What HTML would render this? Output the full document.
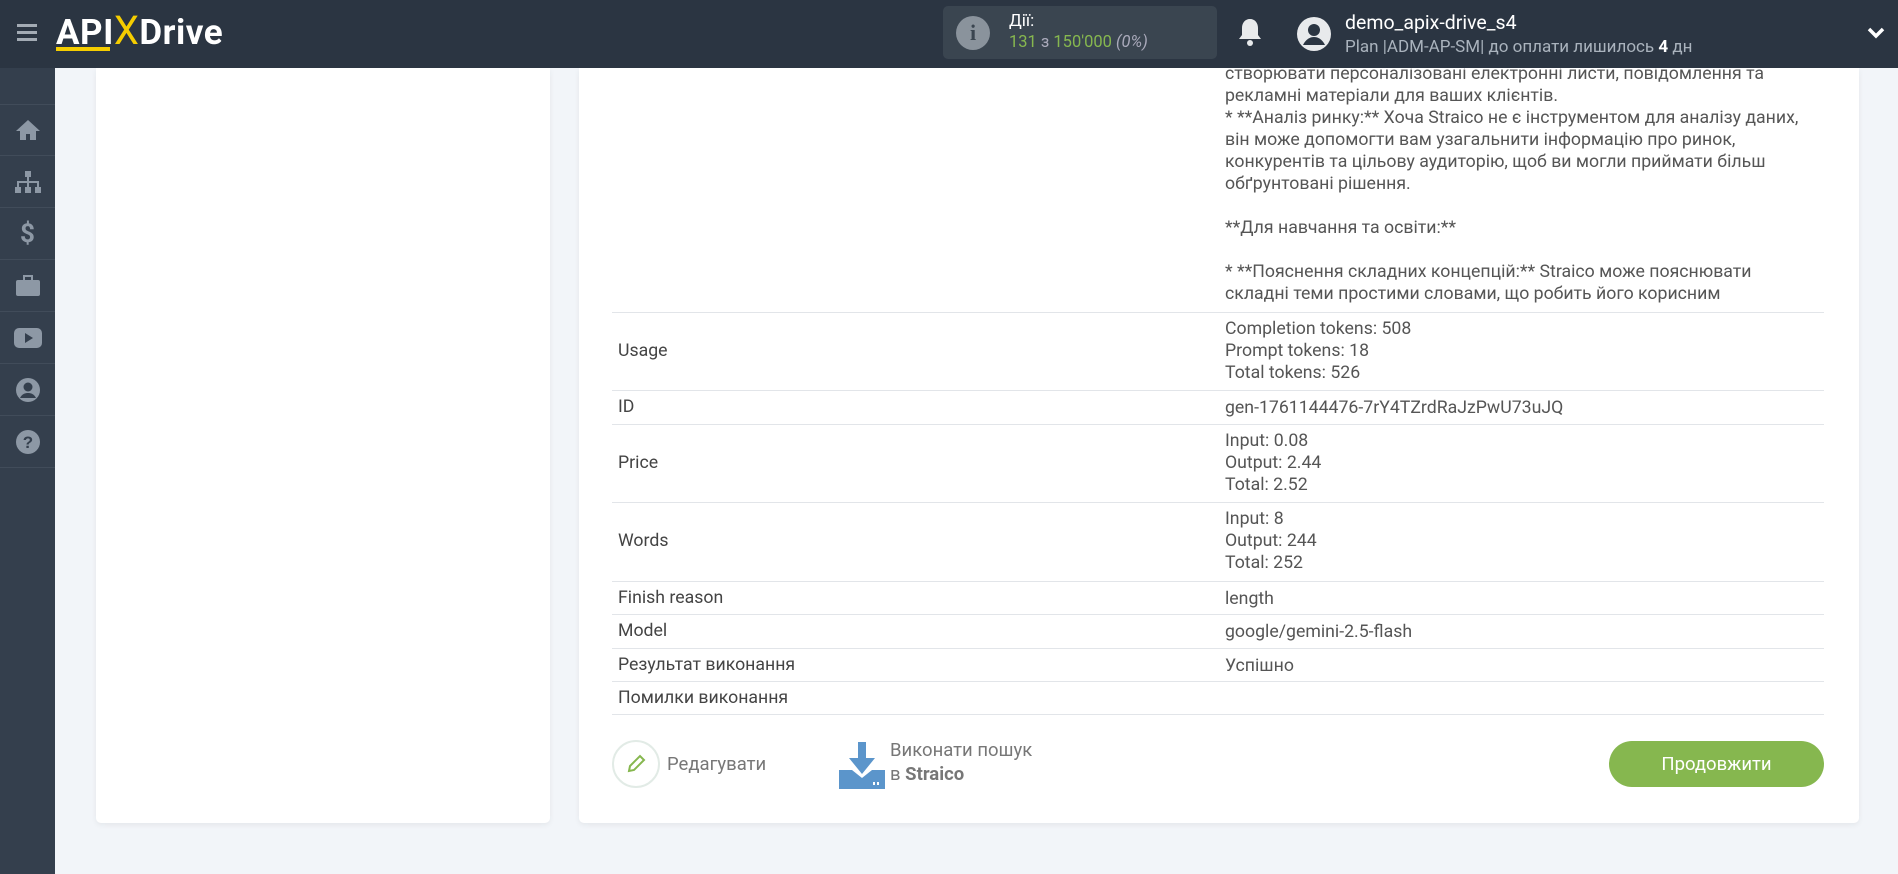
<!DOCTYPE html>
<html><head><meta charset="utf-8"><style>
*{margin:0;padding:0;box-sizing:border-box}
body{width:1898px;height:874px;overflow:hidden;background:#f2f5f9;font-family:"Roboto","Liberation Sans","DejaVu Sans",sans-serif;color:#444;position:relative}
.hdr{position:absolute;left:0;top:0;width:1898px;height:68px;background:#2b3542;z-index:5}
.side{position:absolute;left:0;top:68px;width:55px;height:806px;background:#343f4d}
.side .it{position:absolute;left:0;width:55px;height:52px;border-bottom:1px solid #414c5a;display:flex;align-items:center;justify-content:center}
.card{position:absolute;background:#fff;box-shadow:0 2px 6px rgba(0,0,0,.06);border-radius:0 0 5px 5px}
.txt{position:absolute;left:1225px;top:63px;font-size:17.7px;line-height:22px;color:#555;white-space:pre}
.row{position:absolute;left:612px;width:1212px;border-top:1px solid #e2e5e9;font-size:17.7px;color:#444}
.row .k{position:absolute;left:6px}
.row .v{position:absolute;left:613px;line-height:22px;color:#555}
</style></head><body>
<div class="hdr">
 <div style="position:absolute;left:17px;top:24px;width:20px;height:3px;background:#a3abb4;box-shadow:0 7px 0 #a3abb4,0 14px 0 #a3abb4"></div>
 <div style="position:absolute;left:56px;top:7px;font-size:35px;font-weight:bold;color:#fff;letter-spacing:0.5px">API<span style="color:#f5cd00;font-weight:normal;font-size:40px">X</span>Drive</div>
 <div style="position:absolute;left:56px;top:47px;width:54px;height:4px;background:#f5cd00"></div>
 <div style="position:absolute;left:943px;top:6px;width:274px;height:53px;background:#3a4550;border-radius:5px">
  <div style="position:absolute;left:13px;top:10px;width:34px;height:34px;border-radius:50%;background:#8a939c;color:#3a4550;font:bold 22px 'Liberation Serif',serif;text-align:center;line-height:34px">i</div>
  <div style="position:absolute;left:66px;top:5px;color:#fff;font-size:17px">Дії:</div>
  <div style="position:absolute;left:66px;top:27px;color:#86b74f;font-size:16.5px">131 <span style="color:#aab">з</span> 150'000 <i style="color:#aab">(0%)</i></div>
 </div>
 <svg style="position:absolute;left:1237px;top:17px" width="26" height="30" viewBox="0 0 26 30"><path d="M13 2c-5 0-8 4-8 9v7l-3 4h22l-3-4v-7c0-5-3-9-8-9z" fill="#e8eaec"/><circle cx="13" cy="26" r="3" fill="#e8eaec"/></svg>
 <svg style="position:absolute;left:1296px;top:16px" width="36" height="36" viewBox="0 0 36 36"><circle cx="18" cy="18" r="17" fill="#e8eaec"/><circle cx="18" cy="14" r="6" fill="#2b3542"/><path d="M7 29c3-6 7-8 11-8s8 2 11 8" fill="#2b3542"/></svg>
 <div style="position:absolute;left:1345px;top:11px;color:#fff;font-size:19.5px">demo_apix-drive_s4</div>
 <div style="position:absolute;left:1345px;top:37px;color:#aab3bd;font-size:17px">Plan |ADM-AP-SM| до оплати лишилось <b style="color:#fff">4</b> дн</div>
 <svg style="position:absolute;left:1867px;top:27px" width="18" height="12" viewBox="0 0 18 12"><path d="M2 2l7 7 7-7" stroke="#fff" stroke-width="3.5" fill="none"/></svg>
</div>
<div class="side">
 <div class="it" style="top:36px;border-top:1px solid #414c5a"><svg width="26" height="22" viewBox="0 0 26 22"><path d="M13 1L1 12h4v9h6v-6h4v6h6v-9h4z" fill="#8d98a5"/></svg></div>
 <div class="it" style="top:88px"><svg width="28" height="24" viewBox="0 0 28 24"><rect x="11" y="1" width="6" height="6" fill="#8d98a5"/><rect x="1" y="17" width="6" height="6" fill="#8d98a5"/><rect x="11" y="17" width="6" height="6" fill="#8d98a5"/><rect x="21" y="17" width="6" height="6" fill="#8d98a5"/><path d="M14 7v5M4 17v-5h20v5M14 12v5" stroke="#8d98a5" stroke-width="2" fill="none"/></svg></div>
 <div class="it" style="top:140px;color:#8d98a5;font-size:26px;font-weight:bold">$</div>
 <div class="it" style="top:192px"><svg width="26" height="22" viewBox="0 0 26 22"><rect x="1" y="5" width="24" height="16" rx="2" fill="#8d98a5"/><rect x="9" y="1" width="8" height="5" fill="none" stroke="#8d98a5" stroke-width="2"/></svg></div>
 <div class="it" style="top:244px"><svg width="28" height="20" viewBox="0 0 28 20"><rect x="0" y="0" width="28" height="20" rx="5" fill="#8d98a5"/><path d="M11 5v10l8-5z" fill="#343f4d"/></svg></div>
 <div class="it" style="top:296px"><svg width="26" height="26" viewBox="0 0 26 26"><circle cx="13" cy="13" r="12" fill="#8d98a5"/><circle cx="13" cy="10" r="4.5" fill="#343f4d"/><path d="M5 21c2-4 5-5 8-5s6 1 8 5" fill="#343f4d"/></svg></div>
 <div class="it" style="top:348px"><svg width="26" height="26" viewBox="0 0 26 26"><circle cx="13" cy="13" r="12" fill="#8d98a5"/><text x="13" y="19" text-anchor="middle" font-size="17" font-weight="bold" fill="#343f4d" font-family="Liberation Sans">?</text></svg></div>
</div>
<div class="card" style="left:96px;top:68px;width:454px;height:755px"></div>
<div class="card" style="left:579px;top:68px;width:1280px;height:755px"></div>
<div class="txt">створювати персоналізовані електронні листи, повідомлення та
рекламні матеріали для ваших клієнтів.
* **Аналіз ринку:** Хоча Straico не є інструментом для аналізу даних,
він може допомогти вам узагальнити інформацію про ринок,
конкурентів та цільову аудиторію, щоб ви могли приймати більш
обґрунтовані рішення.

**Для навчання та освіти:**

* **Пояснення складних концепцій:** Straico може пояснювати
складні теми простими словами, що робить його корисним</div>
<div class="row" style="top:312px;height:78px"><span class="k" style="top:28px">Usage</span><div class="v" style="top:5px">Completion tokens: 508<br>Prompt tokens: 18<br>Total tokens: 526</div></div>
<div class="row" style="top:390px;height:34px"><span class="k" style="top:6px">ID</span><div class="v" style="top:6px">gen-1761144476-7rY4TZrdRaJzPwU73uJQ</div></div>
<div class="row" style="top:424px;height:78px"><span class="k" style="top:28px">Price</span><div class="v" style="top:5px">Input: 0.08<br>Output: 2.44<br>Total: 2.52</div></div>
<div class="row" style="top:502px;height:79px"><span class="k" style="top:28px">Words</span><div class="v" style="top:5px">Input: 8<br>Output: 244<br>Total: 252</div></div>
<div class="row" style="top:581px;height:33px"><span class="k" style="top:6px">Finish reason</span><div class="v" style="top:6px">length</div></div>
<div class="row" style="top:614px;height:34px"><span class="k" style="top:6px">Model</span><div class="v" style="top:6px">google/gemini-2.5-flash</div></div>
<div class="row" style="top:648px;height:33px"><span class="k" style="top:6px">Результат виконання</span><div class="v" style="top:6px">Успішно</div></div>
<div class="row" style="top:681px;height:34px;border-bottom:1px solid #e2e5e9"><span class="k" style="top:6px">Помилки виконання</span></div>
<div style="position:absolute;left:612px;top:740px;width:48px;height:48px;border:2px solid #e2ebe6;border-radius:50%"></div>
<svg style="position:absolute;left:624px;top:752px" width="24" height="24" viewBox="0 0 24 24"><path d="M5 19l1-5L16 4l4 4L10 18z" fill="none" stroke="#86b74f" stroke-width="2"/></svg>
<div style="position:absolute;left:667px;top:753px;font-size:18.5px;color:#777">Редагувати</div>
<svg style="position:absolute;left:839px;top:742px" width="46" height="47" viewBox="0 0 46 47"><rect x="19" y="0" width="8" height="18" fill="#5b95cb"/><path d="M10 16h26L23 32z" fill="#5b95cb"/><path d="M0 28h13l10 8 10-8h13v19H0z" fill="#5b95cb"/><rect x="34" y="40" width="2" height="3" fill="#fff"/><rect x="38" y="40" width="2" height="3" fill="#fff"/></svg>
<div style="position:absolute;left:890px;top:738px;font-size:18.5px;color:#777;line-height:24px">Виконати пошук<br>в <b>Straico</b></div>
<div style="position:absolute;left:1609px;top:741px;width:215px;height:46px;background:#86b74f;border-radius:23px;color:#fff;font-size:18.5px;text-align:center;line-height:46px">Продовжити</div>
</body></html>
